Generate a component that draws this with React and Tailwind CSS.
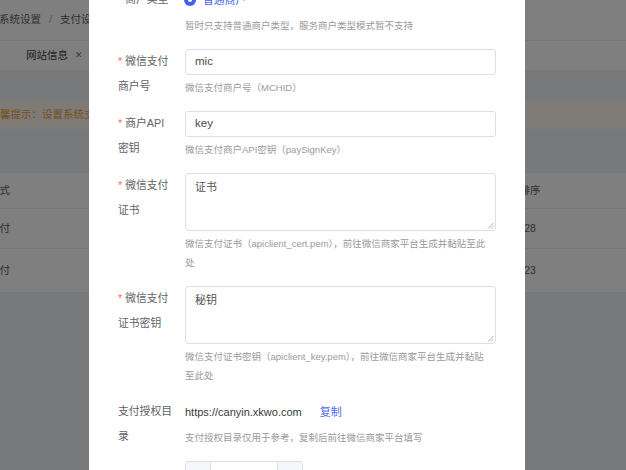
function Item({ label = [], required, children, hint = [], mb = "mb-[14px]" }) {
  return (
    <div className={`flex ${mb}`}>
      <div className="w-[56px] shrink-0 mr-[11px] -mb-[4px] text-[10.8px] leading-[25px] text-[#606266] whitespace-nowrap">
        {label.map((l, i) => (
          <div key={i}>
            {i === 0 && required && <span className="text-[#f56c6c] mr-[3px]">*</span>}
            {l}
          </div>
        ))}
      </div>
      <div className="flex-1 min-w-0">
        {children}
        {hint.length > 0 && (
          <div className="pt-[3px] text-[9.5px] leading-[19px] text-[#9a9a9a] whitespace-nowrap">
            {hint.map((h, i) => (
              <div key={i}>{h}</div>
            ))}
          </div>
        )}
      </div>
    </div>
  );
}

function Input({ value }) {
  return (
    <div className="h-[26px] border border-[#dcdfe6] rounded-[3px] px-[9px] flex items-center text-[11.5px] text-[#4a4a4a]">
      {value}
    </div>
  );
}

function TextArea({ value }) {
  return (
    <div className="relative h-[58px] border border-[#dcdfe6] rounded-[3px] px-[9px] pt-[5px] text-[11px] leading-[16px] text-[#555]">
      {value}
      <svg className="absolute right-[1px] bottom-[1px]" width="7" height="7" viewBox="0 0 7 7">
        <line x1="1" y1="6.5" x2="6.5" y2="1" stroke="#999" strokeWidth="0.8" />
        <line x1="4" y1="6.5" x2="6.5" y2="4" stroke="#999" strokeWidth="0.8" />
      </svg>
    </div>
  );
}

export default function App() {
  return (
    <div className="relative w-[626px] h-[470px] overflow-hidden bg-[#f0f2f5] font-['Liberation_Sans','Noto_Sans_CJK_SC',sans-serif]">
      {/* page behind the dialog */}
      <div className="flex flex-col">
        <div className="bg-white">
          <div className="h-[40px] flex items-center gap-[8px] text-[10.5px] text-[#606266] -ml-[1px]">
            <span>系统设置</span>
            <span className="text-[#b0b4bb]">/</span>
            <span>支付设置</span>
          </div>
          <div className="h-[30px] flex items-center border-t border-[#ebeef5] pl-[26px] gap-[7px] text-[10.5px] text-[#444]">
            <span>网站信息</span>
            <span className="text-[9px] text-[#777]">✕</span>
          </div>
        </div>
        <div className="mt-[31px] h-[28px] flex items-center bg-[#fdf6ec] text-[10.5px] text-[#e6a23c] -ml-[10.5px]">
          温馨提示：设置系统支付参数，请谨慎操作
        </div>
        <div className="mt-[44px] bg-white text-[10.5px] text-[#606266]">
          <div className="h-[36px] flex items-center border-b border-[#ebeef5]">
            <span className="-ml-[32px] w-[300px]">支付方式</span>
            <span className="ml-auto w-[40px] mr-[76px] text-center">排序</span>
          </div>
          <div className="h-[40px] flex items-center border-b border-[#ebeef5]">
            <span className="-ml-[32px] w-[300px]">微信支付</span>
            <span className="ml-auto w-[40px] mr-[76px] text-center">28</span>
          </div>
          <div className="h-[44px] flex items-center border-b border-[#ebeef5]">
            <span className="-ml-[32px] w-[300px]">余额支付</span>
            <span className="ml-auto w-[40px] mr-[76px] text-center">23</span>
          </div>
        </div>
      </div>

      {/* overlay */}
      <div className="absolute inset-0 bg-black/50" />

      {/* dialog */}
      <div className="absolute left-[89px] top-0 w-[436px] h-full bg-white overflow-hidden">
        <div className="-mt-[13px] px-[29px]">
          <Item
            label={["商户类型"]}
            required
            hint={["暂时只支持普通商户类型，服务商户类型模式暂不支持"]}
          >
            <div className="h-[26px] flex items-center">
              <div className="w-[12px] h-[12px] rounded-full bg-[#4361ee] flex items-center justify-center -ml-[1px]">
                <div className="w-[4px] h-[4px] rounded-full bg-white" />
              </div>
              <span className="ml-[7px] text-[10.8px] text-[#4361ee]">普通商户</span>
            </div>
          </Item>

          <Item label={["微信支付", "商户号"]} required hint={["微信支付商户号（MCHID）"]}>
            <Input value="mic" />
          </Item>

          <Item label={["商户API", "密钥"]} required hint={["微信支付商户API密钥（paySignKey）"]}>
            <Input value="key" />
          </Item>

          <Item
            label={["微信支付", "证书"]}
            required
            hint={["微信支付证书（apiclient_cert.pem），前往微信商家平台生成并黏贴至此", "处"]}
          >
            <TextArea value="证书" />
          </Item>

          <Item
            label={["微信支付", "证书密钥"]}
            required
            hint={["微信支付证书密钥（apiclient_key.pem），前往微信商家平台生成并黏贴", "至此处"]}
          >
            <TextArea value="秘钥" />
          </Item>

          <Item label={["支付授权目", "录"]} hint={["支付授权目录仅用于参考，复制后前往微信商家平台填写"]}>
            <div className="h-[26px] flex items-center text-[11px]">
              <span className="text-[#3a3a3a]">https://canyin.xkwo.com</span>
              <span className="ml-[18px] text-[#4f6bed]">复制</span>
            </div>
          </Item>

          <Item label={[""]}>
            <div className="w-[118px] h-[28px] flex border border-[#dcdfe6] rounded-[3px] overflow-hidden">
              <div className="w-[25px] bg-[#f5f7fa] border-r border-[#dcdfe6]" />
              <div className="flex-1" />
              <div className="w-[25px] bg-[#f5f7fa] border-l border-[#dcdfe6]" />
            </div>
          </Item>
        </div>
      </div>
    </div>
  );
}
